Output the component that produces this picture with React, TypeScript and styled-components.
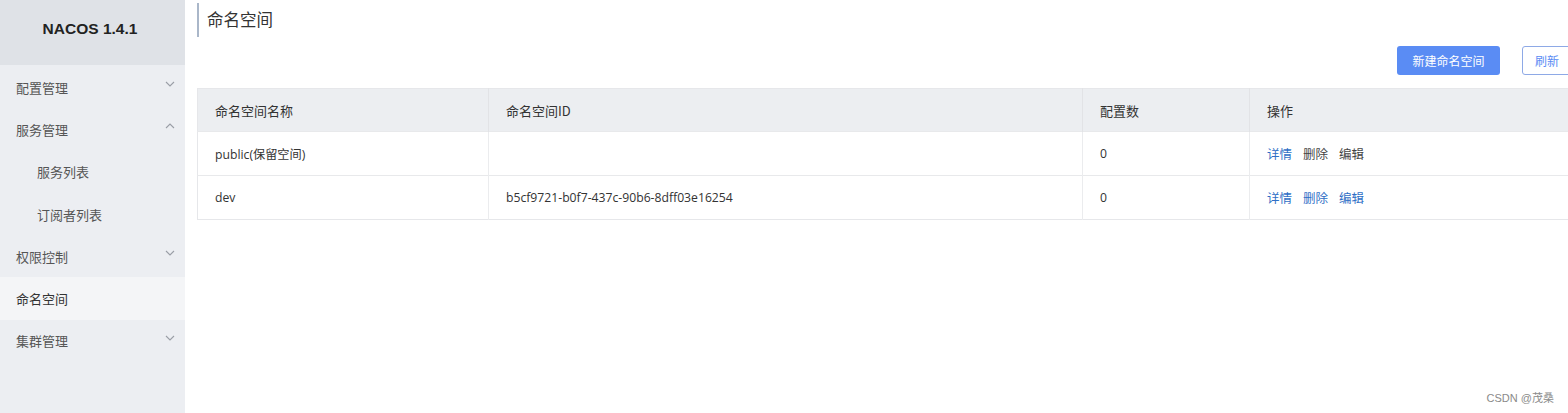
import React from "react";
import styled, { createGlobalStyle } from "styled-components";

const GlobalStyle = createGlobalStyle`
  html, body {
    margin: 0;
    padding: 0;
    background: #ffffff;
    overflow: hidden;
  }
  body {
    font-family: "Noto Sans CJK SC", "Open Sans", "Liberation Sans", sans-serif;
  }
`;

type MenuItem = { label: string; sub?: boolean; arrow?: "down" | "up"; active?: boolean };

const menu: MenuItem[] = [
  { label: "配置管理", arrow: "down" },
  { label: "服务管理", arrow: "up" },
  { label: "服务列表", sub: true },
  { label: "订阅者列表", sub: true },
  { label: "权限控制", arrow: "down" },
  { label: "命名空间", active: true },
  { label: "集群管理", arrow: "down" },
];

const rows = [
  { name: "public(保留空间)", id: "", count: "0", reserved: true },
  { name: "dev", id: "b5cf9721-b0f7-437c-90b6-8dff03e16254", count: "0", reserved: false },
];

const columns = [
  { title: "命名空间名称", width: 291 },
  { title: "命名空间ID", width: 594 },
  { title: "配置数", width: 167 },
  { title: "操作" },
];

function Chevron({ dir }: { dir: "down" | "up" }) {
  return (
    <svg width="10" height="6" viewBox="0 0 10 6">
      <path
        d={dir === "down" ? "M1 1 L5 5 L9 1" : "M1 5 L5 1 L9 5"}
        fill="none"
        stroke="#9a9ea6"
        strokeWidth="1.1"
      />
    </svg>
  );
}

export default function App() {
  return (
    <>
      <GlobalStyle />
      <Page>
        <Sidebar>
          <Brand>NACOS 1.4.1</Brand>
          <Menu>
            {menu.map((item, i) => (
              <MenuRow key={i} $sub={item.sub} $active={item.active}>
                <span>{item.label}</span>
                {item.arrow && <Chevron dir={item.arrow} />}
              </MenuRow>
            ))}
          </Menu>
        </Sidebar>
        <Main>
          <Title>命名空间</Title>
          <Toolbar>
            <PrimaryButton>新建命名空间</PrimaryButton>
            <OutlineButton>刷新</OutlineButton>
          </Toolbar>
          <Table>
            <colgroup>
              {columns.map((c, i) => (
                <col key={i} style={c.width ? { width: c.width } : undefined} />
              ))}
            </colgroup>
            <thead>
              <tr>
                {columns.map((c, i) => (
                  <Th key={i}>{c.title}</Th>
                ))}
              </tr>
            </thead>
            <tbody>
              {rows.map((r, i) => (
                <tr key={i}>
                  <Td>{r.name}</Td>
                  <Td>{r.id}</Td>
                  <Td>{r.count}</Td>
                  <Td>
                    <Actions>
                      <Action>详情</Action>
                      <Action $disabled={r.reserved}>删除</Action>
                      <Action $disabled={r.reserved}>编辑</Action>
                    </Actions>
                  </Td>
                </tr>
              ))}
            </tbody>
          </Table>
        </Main>
        <Watermark>CSDN @茂桑</Watermark>
      </Page>
    </>
  );
}

const Page = styled.div`
  display: flex;
  width: 1568px;
  height: 413px;
  overflow: hidden;
  position: relative;
`;

const Sidebar = styled.aside`
  width: 185px;
  flex-shrink: 0;
  background: #eceef2;
  display: flex;
  flex-direction: column;
`;

const Brand = styled.div`
  height: 65px;
  background: #dfe2e7;
  display: flex;
  align-items: center;
  justify-content: center;
  font-family: "Liberation Sans", Arial, sans-serif;
  font-weight: bold;
  font-size: 15.5px;
  color: #222;
  padding-right: 5px;
  padding-bottom: 7px;
  box-sizing: border-box;
`;

const Menu = styled.div`
  display: flex;
  flex-direction: column;
  padding-top: 1px;
`;

const MenuRow = styled.div<{ $sub?: boolean; $active?: boolean }>`
  height: 42.3px;
  display: flex;
  align-items: center;
  justify-content: space-between;
  padding: 0 10px 0 ${(p) => (p.$sub ? 37 : 16)}px;
  font-size: 13px;
  color: ${(p) => (p.$active ? "#333" : "#555")};
  background: ${(p) => (p.$active ? "#f4f5f7" : "transparent")};
  svg {
    margin-top: -6px;
  }
`;

const Main = styled.main`
  flex: 1;
  min-width: 0;
  padding: 3px 0 0 12px;
  margin-right: -14px;
  display: flex;
  flex-direction: column;
`;

const Title = styled.h1`
  margin: 0;
  height: 34px;
  border-left: 2px solid #aab7c9;
  padding: 8px 0 0 8px;
  font-size: 16.5px;
  font-weight: normal;
  color: #333;
  line-height: 1;
  box-sizing: border-box;
`;

const Toolbar = styled.div`
  display: flex;
  justify-content: flex-end;
  gap: 22px;
  margin-top: 9px;
  height: 29px;
`;

const PrimaryButton = styled.button`
  width: 103px;
  height: 29px;
  border: none;
  border-radius: 3px;
  background: #5a8cf4;
  color: #fff;
  font-size: 12px;
  font-family: inherit;
  padding: 0;
`;

const OutlineButton = styled.button`
  width: 60px;
  height: 29px;
  border: 1px solid #8ea9e6;
  border-radius: 3px;
  background: #fff;
  color: #5a8cf4;
  font-size: 12px;
  font-family: inherit;
  padding: 0 10px 0 0;
`;

const Table = styled.table`
  margin-top: 13px;
  border-collapse: collapse;
  table-layout: fixed;
  width: 100%;
  font-size: 13px;
  color: #333;
  border: 1px solid #e6e7ea;
`;

const Th = styled.th`
  height: 43px;
  background: #eceef1;
  text-align: left;
  font-weight: normal;
  padding: 0 0 0 17px;
  border-right: 1px solid #e2e3e6;
  color: #333;
  box-sizing: border-box;
`;

const Td = styled.td`
  height: 44px;
  padding: 0 0 0 17px;
  border-top: 1px solid #e8e9eb;
  border-right: 1px solid #ebecee;
  font-family: "Open Sans", "Noto Sans CJK SC", sans-serif;
  font-size: 12.2px;
  color: #333;
  box-sizing: border-box;
`;

const Actions = styled.div`
  display: flex;
  gap: 11px;
`;

const Action = styled.span<{ $disabled?: boolean }>`
  color: ${(p) => (p.$disabled ? "#444" : "#2f6fc6")};
  font-family: "Noto Sans CJK SC", sans-serif;
  font-size: 12.5px;
`;

const Watermark = styled.div`
  position: absolute;
  right: 14px;
  bottom: 8px;
  font-size: 11px;
  color: #8a8a8a;
  font-family: "Liberation Sans", "Noto Sans CJK SC", sans-serif;
`;
